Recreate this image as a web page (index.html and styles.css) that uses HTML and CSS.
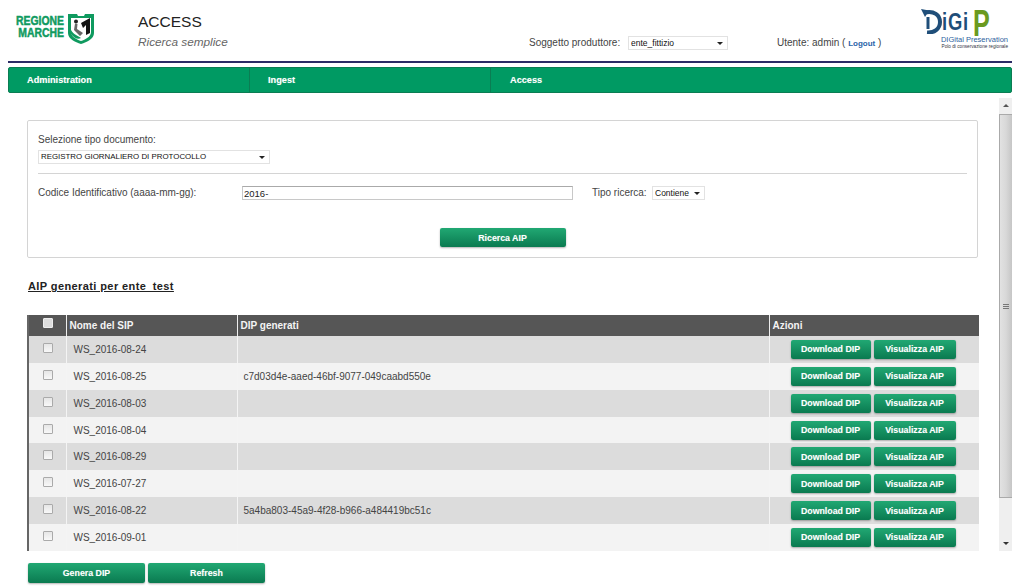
FILE: index.html
```html
<!DOCTYPE html>
<html lang="it">
<head>
<meta charset="utf-8">
<title>ACCESS</title>
<link rel="stylesheet" href="styles.css">
</head>
<body>
<header class="top">
  <div class="brand">
    <div class="brand-name"><span>REGIONE</span><span>MARCHE</span></div>
    <svg class="shield" width="26" height="30" viewBox="0 0 26 30">
      <path d="M0 0H9L10 2H16L17 0H26V19C26 25 19 28 13 30C7 28 0 25 0 19Z" fill="#0f9a5f"/>
      <path d="M3 4H23V18C23 23 17 25.500 13 27C9 25.500 3 23 3 18Z" fill="#fff"/>
      <path d="M13 9L22 4V19L18 21V11L15 14Z" fill="#151515"/>
      <circle cx="8" cy="7.500" r="2" fill="#222"/>
      <path d="M7 9.500L9.500 10L9 15L15 19L12 22L6 16Z" fill="#666"/>
      <path d="M3 16C6 21 9 21 13 24C10 26 6 24 3 20Z" fill="#0f9a5f"/>
    </svg>
  </div>
  <div class="title">
    <div class="title-main">ACCESS</div>
    <div class="title-sub">Ricerca semplice</div>
  </div>
  <div class="producer">
    <span class="producer-lbl">Soggetto produttore:</span>
    <div class="sel sel-producer"><select><option>ente_fittizio</option></select></div>
  </div>
  <div class="user">Utente: admin ( <a class="logout" href="#">Logout</a> )</div>
  <div class="digip">
    <div class="digip-mark">
      <svg class="digip-swoosh" width="21" height="25" viewBox="0 0 21 25">
        <path d="M4 3.500C13 1.500 19 6 19 13C19 20 13 24 6 23.500" fill="none" stroke="#1f4e79" stroke-width="4"/>
        <path d="M0 0L8 1.500L4 8Z" fill="#1f4e79"/>
        <path d="M7 8V20" stroke="#1f4e79" stroke-width="3"/>
      </svg>
      <span class="digip-blue">iGi</span><span class="digip-green">P</span>
    </div>
    <div class="digip-line">DIGital Preservation</div>
    <div class="digip-small">Polo di conservazione regionale</div>
  </div>
</header>
<div class="rule"></div>
<nav class="nav">
  <a class="nav-item" href="#">Administration</a>
  <a class="nav-item" href="#">Ingest</a>
  <a class="nav-item" href="#">Access</a>
</nav>
<div class="middle">
  <main class="scroll">
    <section class="box">
      <label class="lbl">Selezione tipo documento:</label>
      <div class="sel sel-doc"><select><option>REGISTRO GIORNALIERO DI PROTOCOLLO</option></select></div>
      <hr class="sep">
      <div class="code-row">
        <label class="lbl code-lbl">Codice Identificativo (aaaa-mm-gg):</label>
        <input class="code-input" type="text" value="2016-">
        <label class="lbl kind-lbl">Tipo ricerca:</label>
        <div class="sel sel-kind"><select><option>Contiene</option></select></div>
      </div>
      <div class="search-row"><button class="btn btn-search">Ricerca AIP</button></div>
    </section>
    <h2 class="heading">AIP generati per ente_test</h2>
    <table class="grid">
      <colgroup><col class="c1"><col class="c2"><col class="c3"><col class="c4"></colgroup>
      <thead>
        <tr><th class="center"><input class="chk chk-head" type="checkbox"></th><th>Nome del SIP</th><th>DIP generati</th><th>Azioni</th></tr>
      </thead>
      <tbody>
        <tr><td class="center"><input class="chk" type="checkbox"></td><td class="name">WS_2016-08-24</td><td class="dip"></td><td class="act"><button class="btn btn-dl">Download DIP</button><button class="btn btn-view">Visualizza AIP</button></td></tr>
        <tr><td class="center"><input class="chk" type="checkbox"></td><td class="name">WS_2016-08-25</td><td class="dip">c7d03d4e-aaed-46bf-9077-049caabd550e</td><td class="act"><button class="btn btn-dl">Download DIP</button><button class="btn btn-view">Visualizza AIP</button></td></tr>
        <tr><td class="center"><input class="chk" type="checkbox"></td><td class="name">WS_2016-08-03</td><td class="dip"></td><td class="act"><button class="btn btn-dl">Download DIP</button><button class="btn btn-view">Visualizza AIP</button></td></tr>
        <tr><td class="center"><input class="chk" type="checkbox"></td><td class="name">WS_2016-08-04</td><td class="dip"></td><td class="act"><button class="btn btn-dl">Download DIP</button><button class="btn btn-view">Visualizza AIP</button></td></tr>
        <tr><td class="center"><input class="chk" type="checkbox"></td><td class="name">WS_2016-08-29</td><td class="dip"></td><td class="act"><button class="btn btn-dl">Download DIP</button><button class="btn btn-view">Visualizza AIP</button></td></tr>
        <tr><td class="center"><input class="chk" type="checkbox"></td><td class="name">WS_2016-07-27</td><td class="dip"></td><td class="act"><button class="btn btn-dl">Download DIP</button><button class="btn btn-view">Visualizza AIP</button></td></tr>
        <tr><td class="center"><input class="chk" type="checkbox"></td><td class="name">WS_2016-08-22</td><td class="dip">5a4ba803-45a9-4f28-b966-a484419bc51c</td><td class="act"><button class="btn btn-dl">Download DIP</button><button class="btn btn-view">Visualizza AIP</button></td></tr>
        <tr><td class="center"><input class="chk" type="checkbox"></td><td class="name">WS_2016-09-01</td><td class="dip"></td><td class="act"><button class="btn btn-dl">Download DIP</button><button class="btn btn-view">Visualizza AIP</button></td></tr>
      </tbody>
    </table>
  </main>
  <div class="bar">
    <div class="bar-arrow bar-up"></div>
    <div class="bar-thumb"><div class="bar-grip"></div></div>
    <div class="bar-rest"></div>
    <div class="bar-arrow bar-down"></div>
  </div>
</div>
<footer class="foot">
  <button class="btn btn-foot">Genera DIP</button>
  <button class="btn btn-foot">Refresh</button>
</footer>
</body>
</html>
```
FILE: styles.css
```css
* { box-sizing: border-box; }
html, body { margin: 0; height: 588px; overflow: hidden; background: #fff; }
body { font-family: "Liberation Sans", Arial, sans-serif; font-size: 10px; color: #333; display: flex; flex-direction: column; }

.top { display: flex; height: 61px; flex: none; margin: 0 12px 0 14px; }
.brand { display: flex; width: 124px; padding-top: 14px; align-items: flex-start; }
.brand-name { width: 54px; flex: none; display: flex; flex-direction: column; align-items: flex-end; padding: 1px 5px 0 0; font-weight: bold; font-size: 13px; line-height: 11.500px; color: #0f9a5f; -webkit-text-stroke: .5px #0f9a5f; transform: scaleX(.8); transform-origin: right top; }
.shield { flex: none; }
.title { width: 391px; padding-top: 13px; }
.title-main { font-size: 15.500px; line-height: 18px; color: #222; }
.title-sub { font-size: 11.800px; line-height: 14px; margin-top: 4px; font-style: italic; color: #666; }
.producer { display: flex; width: 248px; flex: none; padding-top: 36px; align-items: flex-start; font-size: 10px; color: #444; }
.producer-lbl { width: 99px; line-height: 14px; flex: none; white-space: nowrap; }
.user { width: 143px; flex: none; padding-top: 36px; line-height: 14px; font-size: 10px; color: #444; }
.logout { color: #2a63a8; font-weight: bold; font-size: 8px; text-decoration: none; }
.digip { flex: 1; padding: 9px 4px 0 0; text-align: right; white-space: nowrap; overflow: hidden; }
.digip-mark { display: flex; align-items: flex-start; height: 27px; padding-left: 1px; font-weight: bold; }
.digip-swoosh { flex: none; }
.digip-blue { width: 31px; flex: none; text-align: left; color: #1f4e79; font-size: 23px; line-height: 26px; letter-spacing: 1px; transform: scaleX(.8); transform-origin: left top; }
.digip-green { width: 17px; flex: none; text-align: left; color: #6a9a20; font-size: 37px; line-height: 30px; transform: scaleX(.68); transform-origin: left top; }
.digip-line { color: #2d5f9e; font-size: 7.500px; line-height: 8px; }
.digip-small { color: #334; font-size: 4.700px; line-height: 6px; }

.rule { height: 2px; margin: 0 12px 0 8px; background: #2b2b66; flex: none; }

.nav { display: flex; height: 26px; flex: none; margin: 4px 12px 0 8px; background: #009a63; border: 1px solid #0b7d53; border-radius: 2px; }
.nav-item { width: 241px; padding-left: 18px; font-size: 9.200px; font-weight: bold; color: #fff; line-height: 24px; text-decoration: none; border-right: 1px solid #0b7d53; text-shadow: 0 0 1px rgba(255,255,255,.4); }
.nav-item:nth-child(3) { border-right: 0; padding-left: 19px; }

.middle { flex: none; height: 453px; margin-top: 5px; display: flex; padding: 0 12px 0 27px; }
.scroll { width: 952px; height: 453px; overflow: hidden; padding-top: 22px; }
.bar { width: 13px; margin-left: 20px; height: 453px; display: flex; flex-direction: column; background: #efefef; }
.bar-arrow { height: 16px; flex: none; position: relative; background: #efefef; }
.bar-up::after, .bar-down::after { content: ""; position: absolute; left: 3.500px; border-left: 3px solid transparent; border-right: 3px solid transparent; }
.bar-up::after { top: 6px; border-bottom: 3px solid #555; }
.bar-down::after { top: 7px; border-top: 3px solid #333; }
.bar-thumb { height: 384px; flex: none; background: linear-gradient(90deg,#e2e2e2,#d8d8d8 50%,#c6c6c6); border: 1px solid #aaa; border-width: 1px 0 1px 1px; display: flex; align-items: center; justify-content: center; }
.bar-grip { width: 6px; height: 6px; background: repeating-linear-gradient(0deg,#777 0 1px,transparent 1px 2px); }
.bar-rest { flex: 1; }

.box { width: 951px; height: 138px; border: 1px solid #d4d4d4; border-radius: 2px; padding: 12px 10px 0; display: flex; flex-direction: column; }
.lbl { font-size: 10px; line-height: 14px; color: #444; white-space: nowrap; flex: none; }
.sel { position: relative; background: #fff; border: 1px solid #e2e2e2; height: 14px; flex: none; }
.sel select { appearance: none; -webkit-appearance: none; border: 0; background: transparent; width: 100%; height: 12px; padding: 0 0 0 2px; margin: 0; font-family: "Liberation Sans", sans-serif; font-size: 8.500px; line-height: 12px; color: #111; display: block; }
.sel::after { content: ""; position: absolute; right: 4px; top: 5px; border-left: 3px solid transparent; border-right: 3px solid transparent; border-top: 3px solid #222; }
.sel-producer { width: 100px; }
.sel-doc { width: 232px; margin-top: 3px; }
.sel-doc select { font-size: 7.900px; }
.sep { width: 929px; margin: 9px 0 0; border: 0; border-top: 1px solid #d4d4d4; align-self: flex-start; }
.code-row { display: flex; align-items: center; margin-top: 12px; height: 14px; }
.code-lbl { width: 204px; }
.code-input { width: 331px; height: 14px; flex: none; padding: 0 1px; border: 1px solid #c8c8c8; border-top-color: #aaa; font-family: "Liberation Sans", sans-serif; font-size: 9.500px; color: #222; }
.kind-lbl { margin-left: 19px; width: 60px; }
.sel-kind { width: 53px; }
.search-row { display: flex; justify-content: center; margin-top: 28px; }

.btn { border: 0; border-radius: 2px; background: linear-gradient(#21a873,#0a7a50); color: #fff; font-family: "Liberation Sans", sans-serif; font-weight: bold; font-size: 8.800px; padding: 0; text-shadow: 0 0 1px rgba(255,255,255,.35); box-shadow: 0 1px 2px rgba(0,0,0,.3); }
.btn-search { width: 126px; height: 19px; }

.heading { margin: 22px 0 0 1px; font-size: 11px; line-height: 13px; font-weight: bold; color: #222; text-decoration: underline; letter-spacing: .4px; }

.grid { margin-top: 22px; width: 952px; table-layout: fixed; border-collapse: collapse; border-left: 2px solid #666; border-right: 2px solid #666; }
.c1 { width: 38px; } .c2 { width: 171px; } .c3 { width: 532px; } .c4 { width: 211px; }
.grid th { height: 21px; padding: 0 0 0 3px; text-align: left; background: #565656; color: #f4f4f4; font-size: 10px; font-weight: bold; border-left: 1px solid #eee; }
.grid th:first-child { border-left: 0; padding: 0; }
.grid td { height: 26.860px; padding: 0; font-size: 10px; color: #444; border-left: 1px solid #f4f4f4; }
.grid td:first-child { border-left: 0; }
.grid tbody tr:nth-child(odd) td { background: #dcdcdc; }
.grid tbody tr:nth-child(even) td { background: #f3f3f3; }
.grid .center { text-align: center; padding-left: 2px; }
.grid th.center { text-align: center; padding: 0 0 0 2px; }
.name { padding-left: 7px !important; }
.dip { padding-left: 6px !important; }
.act { padding-left: 21px !important; white-space: nowrap; font-size: 0 !important; }
.chk { appearance: none; -webkit-appearance: none; width: 10px; height: 10px; margin: 0 0 3px; display: inline-block; vertical-align: middle; border: 1px solid #aaa; background: linear-gradient(#e6e6e6,#f8f8f8); border-radius: 1px; }
.chk-head { background: #ddd; border-color: #eee; margin-bottom: 5px; }
.btn-dl { width: 80px; height: 19px; }
.btn-view { width: 82px; height: 19px; margin-left: 3px; }

.foot { flex: none; display: flex; gap: 3px; padding: 12px 0 0 28px; }
.btn-foot { width: 117px; height: 20px; }
```
